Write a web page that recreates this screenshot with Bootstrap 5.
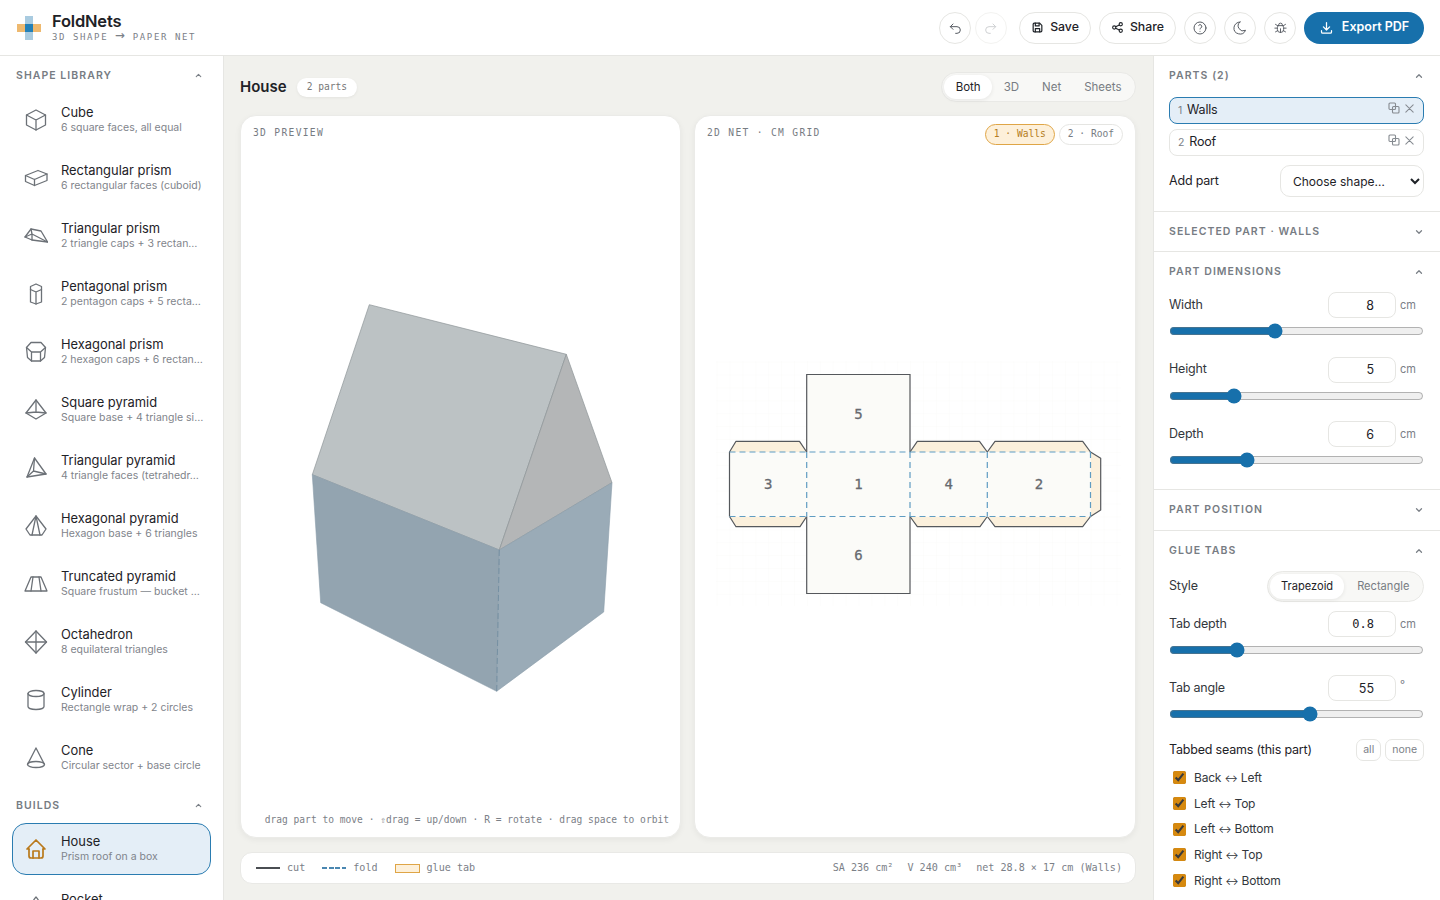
<!DOCTYPE html>
<html lang="en">
<head>
  <meta charset="UTF-8">
  <meta name="viewport" content="width=device-width, initial-scale=1">
  <title>FoldNets</title>
  <link href="https://cdn.jsdelivr.net/npm/bootstrap@5.3.3/dist/css/bootstrap.min.css" rel="stylesheet">
  <style>
    :root { --ink:#1e2227; --mute:#7b8087; --line:#e6e6e3; --blue:#1770ab; --bg:#f1f1ed; }
    html, body { height:100%; overflow:hidden; }
    body { font-family:Inter,"Liberation Sans",sans-serif; color:var(--ink); background:var(--bg); font-size:12.5px; letter-spacing:-.2px; }
    .mono { font-family:"DejaVu Sans Mono","Liberation Mono",monospace; letter-spacing:0; }
    svg.ico { fill:none; stroke:currentColor; stroke-width:1.5; stroke-linecap:round; stroke-linejoin:round; flex:none; }

    .top-bar { height:56px; background:#fff; border-bottom:1px solid var(--line); padding:0 16px 0 17px; flex:none; }
    .logo-grid { display:grid; grid-template-columns:repeat(3,8px); grid-template-rows:repeat(3,8px); margin-right:11px; }
    .brand-name { font-size:16.5px; font-weight:600; line-height:18px; letter-spacing:-.2px; }
    .brand-sub { font-size:9px; letter-spacing:1.6px; line-height:11px; margin-top:2px; color:#7b8087; white-space:nowrap; }
    .brand-arrow { font-size:16px; line-height:0; letter-spacing:1px; }
    .round-btn { width:32px; height:32px; border-radius:50%; border:1px solid var(--line); background:#fff; color:#565b62; padding:0; display:flex; align-items:center; justify-content:center; }
    .round-btn.faded { color:#cfd1d3; border-color:#f3f3f1; }
    .pill-btn { height:32px; border-radius:16px; border:1px solid var(--line); background:#fff; color:var(--ink); font-size:12.3px; font-weight:500; padding:0 11px; display:flex; align-items:center; gap:6px; letter-spacing:0; }
    .export-btn { height:32px; width:120px; border-radius:16px; border:0; background:var(--blue); color:#fff; font-size:12.5px; font-weight:600; display:flex; align-items:center; justify-content:center; gap:8px; letter-spacing:0; }

    .app-body { min-height:0; }
    .left-pane { width:224px; flex:none; background:#fff; border-right:1px solid var(--line); overflow:hidden; padding:0 12px; }
    .right-pane { width:287px; flex:none; background:#fff; border-left:1px solid var(--line); overflow:hidden; }
    .sec-title { font-size:10.5px; font-weight:600; letter-spacing:1.05px; color:#777c83; text-transform:uppercase; white-space:nowrap; }
    .sec-chev { color:#7b8087; }
    .left-head { height:38px; padding:1px 4px 0; }
    .left-head.builds-head { height:33px; padding:0 4px 2px; }
    .shape-row { height:52px; margin-bottom:6px; padding:0 10px 0 11px; border:1.5px solid transparent; border-radius:14px; gap:13px; }
    .shape-row > div { margin-top:-1px; }
    .shape-row.is-on { background:#e4eef7; border-color:#2a7cb1; }
    .shape-ico { width:24px; height:24px; color:#6c7177; }
    svg.ico.shape-ico { stroke-width:1.3; }
    .shape-row.is-on .shape-ico { color:#b9791b; }
    .shape-name { font-size:12.9px; line-height:16px; font-weight:400; white-space:nowrap; letter-spacing:0; }
    .shape-desc { font-size:10.5px; line-height:13px; color:#7f848b; white-space:nowrap; letter-spacing:0; }

    .center-pane { min-width:0; padding:16px 17px 0 16px; }
    .view-head { height:30px; margin-bottom:13px; }
    .view-title { font-size:15px; font-weight:600; letter-spacing:0; }
    .count-chip { height:19px; border-radius:10px; background:#fff; font-size:9.6px; color:#777; padding:0 10px; margin-left:10px; display:flex; align-items:center; box-shadow:0 1px 3px rgba(0,0,0,.06); }
    .seg-wrap { background:#f8f8f6; border:1px solid #e9e9e6; border-radius:15px; padding:2px; display:flex; align-items:center; }
    .seg-item { font-size:11.5px; color:#777c83; padding:0 11.5px; height:24px; line-height:24px; border-radius:12px; letter-spacing:0; }
    .seg-item.is-on { background:#fff; color:var(--ink); box-shadow:0 1px 4px rgba(0,0,0,.08); }
    .view-card { background:#fff; border:1px solid #ebebe8; border-radius:16px; box-shadow:0 2px 6px rgba(0,0,0,.05); height:723px; width:441px; display:flex; flex-direction:column; overflow:hidden; }
    .view-card + .view-card { margin-left:13px; width:442px; }
    .card-top { height:34px; flex:none; padding:0 12px; font-size:9.6px; letter-spacing:1.33px; color:#777c83; }
    .net-chip { font-size:9.6px; height:21px; border-radius:11px; border:1px solid #e5e5e2; color:#777c83; letter-spacing:0; padding:0 8px; margin-top:2px; display:flex; align-items:center; background:#fff; white-space:nowrap; }
    .net-chip.is-on { background:#fdf0da; border-color:#dfa546; color:#b47c22; }
    .card-canvas { flex:1 1 auto; min-height:0; display:block; }
    .card-foot { height:38px; flex:none; font-size:9.6px; line-height:14px; padding:14px 11px 0 0; color:#7b8087; text-align:right; white-space:nowrap; }
    .legend-bar { height:32px; margin-top:14px; background:#fff; border:1px solid #e9e9e6; border-radius:12px; padding:0 13px 0 15px; font-size:10.1px; color:#7b8087; white-space:nowrap; }
    .legend-stat { margin-left:14px; }
    .lg-cut { width:24px; height:2px; background:#4a4d52; margin-right:7px; }
    .lg-fold { width:24px; height:2px; background:repeating-linear-gradient(90deg,#4a87b1 0 5px,transparent 5px 6.500px); margin:0 7px 0 17px; }
    .lg-tab { width:25px; height:9px; background:#fdf0da; border:1.5px solid #dfa546; margin:0 7px 0 17px; }

    .side-sec { padding:0 16px 0 15px; border-bottom:1px solid var(--line); }
    .side-head { height:40px; padding-bottom:1px; }
    .side-head.thin { height:39px; padding-bottom:0; }
    .part-row { height:27px; border:1px solid var(--line); border-radius:8px; padding:0 8px 0 8px; margin-bottom:5px; font-size:12.5px; }
    .part-row.is-on { background:#e4eef7; border:1.5px solid #2a7cb1; }
    .part-num { font-size:10.5px; color:#7b8087; margin-right:5px; }
    svg.ico.part-act { color:#858a90; stroke-width:1.1; margin-top:-5px; }
    .add-select { width:144px; height:32px; border:1px solid var(--line); border-radius:10px; background:#fff; font:inherit; font-size:12px; padding:0 4px 0 8px; color:var(--ink); }
    .field-line { height:26px; color:#33373c; }
    .num-box { width:68px; height:26px; padding:0 6px; text-align:right; font-size:12.5px; border:1px solid var(--line); border-radius:8px; margin-left:auto; color:var(--ink); box-shadow:none; letter-spacing:0; }
    .num-box.mono { font-size:12px; }
    .num-unit { width:28px; padding-left:4px; font-size:11px; color:#7b8087; letter-spacing:0; }
    .slide-line { display:block; width:100%; height:16px; margin:5px 0 0; accent-color:var(--blue); }
    .field-gap { height:17.5px; }
    .field-gap.tight { height:17px; }
    .seg-wrap.tall { border-radius:16px; height:31px; width:157px; }
    .seg-wrap.tall .seg-item { height:25px; line-height:25px; font-size:11.1px; padding:0 11px; margin-right:2px; }
    .tiny-btn { height:22px; border:1px solid var(--line); border-radius:7px; background:#fff; font-size:10.5px; color:#7b8087; padding:0 6px; letter-spacing:0; }
    .seam-line { height:25.7px; font-size:12px; color:#33373c; padding-left:4px; gap:8px; }
    .seam-line input { accent-color:#d6890f; margin:0; width:13px; height:13px; }
    .seam-arrow { font-size:10px; }
  </style>
</head>
<body>
<div class="d-flex flex-column vh-100">

  <!-- top bar -->
  <header class="top-bar d-flex align-items-center">
    <div class="logo-grid">
      <span></span><span style="background:#a9cbe0"></span><span></span>
      <span style="background:#eeb96f"></span><span style="background:#2280b8"></span><span style="background:#eeb96f"></span>
      <span></span><span style="background:#a9cbe0"></span><span></span>
    </div>
    <div>
      <div class="brand-name">FoldNets</div>
      <div class="brand-sub mono">3D SHAPE <span class="brand-arrow">→</span> PAPER NET</div>
    </div>
    <div class="ms-auto d-flex align-items-center gap-2">
      <div class="d-flex gap-1 me-1">
        <button class="round-btn" type="button"><svg class="ico" width="16" height="16" viewBox="0 0 24 24"><path d="M9 14l-4-4 4-4"/><path d="M5 10h10a5 5 0 0 1 0 10h-2"/></svg></button>
        <button class="round-btn faded" type="button"><svg class="ico" width="16" height="16" viewBox="0 0 24 24"><path d="M15 14l4-4-4-4"/><path d="M19 10h-10a5 5 0 0 0 0 10h2"/></svg></button>
      </div>
      <button class="pill-btn" type="button"><svg class="ico" width="13" height="13" viewBox="0 0 24 24" style="stroke-width:2.200"><path d="M6 4h10l4 4v10a2 2 0 0 1-2 2H6a2 2 0 0 1-2-2V6a2 2 0 0 1 2-2z"/><path d="M8 4v5h7V4"/><path d="M8 20v-6h8v6"/></svg>Save</button>
      <button class="pill-btn" type="button"><svg class="ico" width="13" height="13" viewBox="0 0 24 24" style="stroke-width:2"><circle cx="6" cy="12" r="3"/><circle cx="18" cy="6" r="3"/><circle cx="18" cy="18" r="3"/><path d="M8.700 10.700l6.600-3.400M8.700 13.300l6.600 3.400"/></svg>Share</button>
      <button class="round-btn" type="button"><svg class="ico" width="16" height="16" viewBox="0 0 24 24"><circle cx="12" cy="12" r="9"/><path d="M12 17v.01"/><path d="M12 13.500a1.500 1.500 0 0 1 1-1.500 2.600 2.600 0 1 0-3-4"/></svg></button>
      <button class="round-btn" type="button"><svg class="ico" width="16" height="16" viewBox="0 0 24 24"><path d="M12 3a7.500 7.500 0 0 0 8.300 12.400A9 9 0 1 1 12 3z"/></svg></button>
      <button class="round-btn" type="button"><svg class="ico" width="15" height="15" viewBox="0 0 24 24"><path d="M9 9V8a3 3 0 0 1 6 0v1"/><path d="M8 9h8a6 6 0 0 1 1 3v3a5 5 0 0 1-10 0v-3a6 6 0 0 1 1-3"/><path d="M3 13h4M17 13h4M12 20v-6M4 19l3.400-2M20 19l-3.400-2M4 7l3.800 2.400M20 7l-3.800 2.400"/></svg></button>
      <button class="export-btn" type="button"><svg class="ico" width="15" height="15" viewBox="0 0 24 24" style="stroke-width:2"><path d="M4 17v2a2 2 0 0 0 2 2h12a2 2 0 0 0 2-2v-2"/><path d="M7 11l5 5 5-5M12 4v12"/></svg>Export PDF</button>
    </div>
  </header>

  <div class="app-body d-flex flex-grow-1">

    <!-- shape library -->
    <aside class="left-pane">
      <div class="left-head d-flex align-items-center justify-content-between">
        <span class="sec-title">Shape library</span>
        <svg class="ico sec-chev me-1" width="9" height="9" viewBox="0 0 12 12"><path d="M3 7.500l3-3 3 3"/></svg>
      </div>

      <div class="shape-row d-flex align-items-center">
        <svg class="ico shape-ico" viewBox="0 0 24 24"><path d="M12 2l9.500 5v10L12 22l-9.500-5V7z"/><path d="M2.500 7l9.500 5 9.500-5M12 12v10"/></svg>
        <div><div class="shape-name">Cube</div><div class="shape-desc">6 square faces, all equal</div></div>
      </div>
      <div class="shape-row d-flex align-items-center">
        <svg class="ico shape-ico" viewBox="0 0 24 24"><path d="M1.500 9.500L14 4.500l9 3.500v6.500L10.500 19.500l-9-4z"/><path d="M1.500 9.500l9 4 12.500-5.500M10.500 13.500v6"/></svg>
        <div><div class="shape-name">Rectangular prism</div><div class="shape-desc">6 rectangular faces (cuboid)</div></div>
      </div>
      <div class="shape-row d-flex align-items-center">
        <svg class="ico shape-ico" viewBox="0 0 24 24"><path d="M1 13L7 5l10 2 6.500 11L8 16z"/><path d="M7 5l1 5 15.500 8M1 13l7-3M8 10v6"/></svg>
        <div><div class="shape-name">Triangular prism</div><div class="shape-desc">2 triangle caps + 3 rectan…</div></div>
      </div>
      <div class="shape-row d-flex align-items-center">
        <svg class="ico shape-ico" viewBox="0 0 24 24"><path d="M12 2l5.500 2.500v15.500L12 22l-5.500-2V4.500z"/><path d="M6.500 7.500l5.500 2.500 5.500-2.500M12 10v12"/></svg>
        <div><div class="shape-name">Pentagonal prism</div><div class="shape-desc">2 pentagon caps + 5 recta…</div></div>
      </div>
      <div class="shape-row d-flex align-items-center">
        <svg class="ico shape-ico" viewBox="0 0 24 24"><path d="M7 2.500h10l4.500 5-1 10-4 3.500H7.500l-4-3.500-1-10z"/><path d="M2.500 7.500l5 4.500h9l5-4.500M7.500 12v9M16.500 12v9"/></svg>
        <div><div class="shape-name">Hexagonal prism</div><div class="shape-desc">2 hexagon caps + 6 rectan…</div></div>
      </div>
      <div class="shape-row d-flex align-items-center">
        <svg class="ico shape-ico" viewBox="0 0 24 24"><path d="M12 2l10 13-10 6L2 15z"/><path d="M12 2v12M2 15l10-1 10 1"/></svg>
        <div><div class="shape-name">Square pyramid</div><div class="shape-desc">Square base + 4 triangle si…</div></div>
      </div>
      <div class="shape-row d-flex align-items-center">
        <svg class="ico shape-ico" viewBox="0 0 24 24"><path d="M10.500 2L22 18 3 21z"/><path d="M10.500 2l-1 13L22 18M9.500 15L3 21"/></svg>
        <div><div class="shape-name">Triangular pyramid</div><div class="shape-desc">4 triangle faces (tetrahedr…</div></div>
      </div>
      <div class="shape-row d-flex align-items-center">
        <svg class="ico shape-ico" viewBox="0 0 24 24"><path d="M12 2l10 13-4 6H6l-4-6z"/><path d="M12 2L8 21M12 2l4 19"/></svg>
        <div><div class="shape-name">Hexagonal pyramid</div><div class="shape-desc">Hexagon base + 6 triangles</div></div>
      </div>
      <div class="shape-row d-flex align-items-center">
        <svg class="ico shape-ico" viewBox="0 0 24 24"><path d="M7 5h10l6 14H1z"/><path d="M9 5L7 19M15 5l2 14"/></svg>
        <div><div class="shape-name">Truncated pyramid</div><div class="shape-desc">Square frustum — bucket …</div></div>
      </div>
      <div class="shape-row d-flex align-items-center">
        <svg class="ico shape-ico" viewBox="0 0 24 24"><path d="M12 1l10.500 11L12 23 1.500 12z"/><path d="M1.500 12h21M12 1v22"/></svg>
        <div><div class="shape-name">Octahedron</div><div class="shape-desc">8 equilateral triangles</div></div>
      </div>
      <div class="shape-row d-flex align-items-center">
        <svg class="ico shape-ico" viewBox="0 0 24 24"><ellipse cx="12" cy="5.500" rx="8" ry="3"/><path d="M4 5.500v13c0 1.700 3.600 3 8 3s8-1.300 8-3v-13"/></svg>
        <div><div class="shape-name">Cylinder</div><div class="shape-desc">Rectangle wrap + 2 circles</div></div>
      </div>
      <div class="shape-row d-flex align-items-center">
        <svg class="ico shape-ico" viewBox="0 0 24 24"><path d="M12 2L3.500 18.500M12 2l8.500 16.500"/><ellipse cx="12" cy="18.500" rx="8.500" ry="3"/></svg>
        <div><div class="shape-name">Cone</div><div class="shape-desc">Circular sector + base circle</div></div>
      </div>

      <div class="left-head builds-head d-flex align-items-center justify-content-between">
        <span class="sec-title">Builds</span>
        <svg class="ico sec-chev me-1" width="9" height="9" viewBox="0 0 12 12"><path d="M3 7.500l3-3 3 3"/></svg>
      </div>
      <div class="shape-row is-on d-flex align-items-center">
        <svg class="ico shape-ico" viewBox="0 0 24 24" style="stroke-width:1.700"><path d="M5 12H3l9-9 9 9h-2"/><path d="M5 12v7a2 2 0 0 0 2 2h10a2 2 0 0 0 2-2v-7"/><path d="M9 21v-7h6v7"/></svg>
        <div><div class="shape-name">House</div><div class="shape-desc">Prism roof on a box</div></div>
      </div>
      <div class="shape-row d-flex align-items-center">
        <svg class="ico shape-ico" viewBox="0 0 24 24"><path d="M12 2c3 3 4 6 4 10v6H8v-6c0-4 1-7 4-10z"/></svg>
        <div><div class="shape-name">Rocket</div><div class="shape-desc">Cone on a cylinder</div></div>
      </div>
    </aside>

    <!-- preview area -->
    <main class="center-pane flex-grow-1">
      <div class="view-head d-flex align-items-center">
        <span class="view-title">House</span>
        <span class="count-chip mono">2 parts</span>
        <div class="seg-wrap ms-auto">
          <span class="seg-item is-on">Both</span><span class="seg-item">3D</span><span class="seg-item">Net</span><span class="seg-item">Sheets</span>
        </div>
      </div>

      <div class="d-flex">
        <section class="view-card">
          <div class="card-top d-flex align-items-center mono">3D PREVIEW</div>
          <svg class="card-canvas" viewBox="241 150 439 649">
            <polygon points="369.300,304.700 566.300,354.300 499.300,550 312.300,474.700" fill="#bcc2c4" stroke="#8e9598" stroke-width=".7"/>
            <polygon points="566.300,354.300 612,482.700 499.300,550" fill="#b4b6b7" stroke="#8e9598" stroke-width=".7"/>
            <polygon points="312.300,474.700 499.300,550 496.700,691.300 320.700,602.700" fill="#93a4b0" stroke="#8a9ca9" stroke-width=".6"/>
            <polygon points="499.300,550 612,482.700 603.700,612 496.700,691.300" fill="#9aabb7" stroke="#8a9ca9" stroke-width=".6"/>
            <line x1="499.300" y1="550" x2="496.700" y2="691.300" stroke="#6d8a9e" stroke-width=".8" stroke-dasharray="6 3"/>
          </svg>
          <div class="card-foot mono">drag part to move · ⇧drag = up/down · R = rotate · drag space to orbit</div>
        </section>

        <section class="view-card">
          <div class="card-top d-flex align-items-center mono">
            <span>2D NET · CM GRID</span>
            <span class="net-chip is-on ms-auto me-1">1 · Walls</span>
            <span class="net-chip">2 · Roof</span>
          </div>
          <svg class="card-canvas" viewBox="695 150 440 687">
            <defs>
              <pattern id="cmGrid" x="729.500" y="374.500" width="12.900" height="12.900" patternUnits="userSpaceOnUse">
                <path d="M12.900 0H0V12.900" fill="none" stroke="#f9f9f7" stroke-width=".6"/>
              </pattern>
            </defs>
            <rect x="716" y="361" width="405" height="245" fill="url(#cmGrid)"/>
            <!-- glue tabs -->
            <g fill="#fbf0dc" stroke="#55585c" stroke-width="1.200" stroke-linejoin="round">
              <polyline points="729.500,452 736,441.300 799.500,441.300 806.700,452"/>
              <polyline points="729.500,516.500 736,526.700 800,526.700 806.700,516.500"/>
              <polyline points="910,452 917.300,441.300 979.500,441.300 987.300,452"/>
              <polyline points="910,516.500 917.300,526.700 980,526.700 987.300,516.500"/>
              <polyline points="987.300,452 995,441.300 1082.700,441.300 1090.500,452"/>
              <polyline points="987.300,516.500 995,526.700 1082.700,526.700 1090.500,516.500"/>
              <polyline points="1090.500,452 1100.700,458.300 1100.700,510 1090.500,516.500"/>
            </g>
            <!-- faces -->
            <path d="M806.700 374.500H910V452H1090.500V516.500H910V593.500H806.700V516.500H729.500V452H806.700Z" fill="#fbfbf8"/>
            <path d="M806.700 452V374.500H910V452M806.700 516.500V593.500H910V516.500M729.500 452V516.500" fill="none" stroke="#55585c" stroke-width="1.200"/>
            <!-- folds -->
            <g stroke="#5f9cc2" stroke-width="1.200" stroke-dasharray="6 4" fill="none">
              <path d="M729.500 452H1090.500M729.500 516.500H1090.500"/>
              <path d="M806.700 452V516.500M910 452V516.500M987.300 452V516.500M1090.500 452V516.500"/>
            </g>
            <g font-family="DejaVu Sans Mono, monospace" font-size="14" fill="#66696f" stroke="#66696f" stroke-width=".3" text-anchor="middle">
              <text x="858.300" y="418.500">5</text>
              <text x="768" y="489">3</text>
              <text x="858.300" y="489">1</text>
              <text x="948.600" y="489">4</text>
              <text x="1038.800" y="489">2</text>
              <text x="858.300" y="560">6</text>
            </g>
          </svg>
        </section>
      </div>

      <div class="legend-bar d-flex align-items-center mono">
        <span class="lg-cut"></span><span>cut</span>
        <span class="lg-fold"></span><span>fold</span>
        <span class="lg-tab"></span><span>glue tab</span>
        <span class="ms-auto">SA 236 cm²</span>
        <span class="legend-stat">V 240 cm³</span>
        <span class="legend-stat">net 28.8 × 17 cm (Walls)</span>
      </div>
    </main>

    <!-- settings -->
    <aside class="right-pane">
      <div class="side-sec" style="height:156px">
        <div class="side-head d-flex align-items-center justify-content-between" style="height:41px">
          <span class="sec-title">Parts (2)</span>
          <svg class="ico sec-chev" width="10" height="10" viewBox="0 0 12 12"><path d="M3 7.500l3-3 3 3"/></svg>
        </div>
        <div class="part-row is-on d-flex align-items-center">
          <span class="part-num">1</span><span>Walls</span>
          <svg class="ico part-act ms-auto me-1" width="12" height="12" viewBox="0 0 12 12"><rect x="1" y="1" width="6.500" height="6.500" rx="1"/><rect x="4.500" y="4.500" width="6.500" height="6.500" rx="1"/></svg>
          <svg class="ico part-act" width="11" height="11" viewBox="0 0 12 12"><path d="M2 2l8 8M10 2l-8 8"/></svg>
        </div>
        <div class="part-row d-flex align-items-center">
          <span class="part-num">2</span><span>Roof</span>
          <svg class="ico part-act ms-auto me-1" width="12" height="12" viewBox="0 0 12 12"><rect x="1" y="1" width="6.500" height="6.500" rx="1"/><rect x="4.500" y="4.500" width="6.500" height="6.500" rx="1"/></svg>
          <svg class="ico part-act" width="11" height="11" viewBox="0 0 12 12"><path d="M2 2l8 8M10 2l-8 8"/></svg>
        </div>
        <div class="d-flex align-items-center justify-content-between" style="margin-top:9px">
          <span>Add part</span>
          <select class="add-select"><option>Choose shape…</option></select>
        </div>
      </div>

      <div class="side-sec">
        <div class="side-head thin d-flex align-items-center justify-content-between">
          <span class="sec-title">Selected part · Walls</span>
          <svg class="ico sec-chev" width="10" height="10" viewBox="0 0 12 12"><path d="M3 4.500l3 3 3-3"/></svg>
        </div>
      </div>

      <div class="side-sec" style="height:238px">
        <div class="side-head d-flex align-items-center justify-content-between">
          <span class="sec-title">Part dimensions</span>
          <svg class="ico sec-chev" width="10" height="10" viewBox="0 0 12 12"><path d="M3 7.500l3-3 3 3"/></svg>
        </div>
        <div class="field-line d-flex align-items-center"><span>Width</span><input class="form-control num-box" type="number" value="8"><span class="num-unit">cm</span></div>
        <input class="slide-line" type="range" min="0" max="100" step="0.1" value="41">
        <div class="field-gap"></div>
        <div class="field-line d-flex align-items-center"><span>Height</span><input class="form-control num-box" type="number" value="5"><span class="num-unit">cm</span></div>
        <input class="slide-line" type="range" min="0" max="100" step="0.1" value="23.700">
        <div class="field-gap"></div>
        <div class="field-line d-flex align-items-center"><span>Depth</span><input class="form-control num-box" type="number" value="6"><span class="num-unit">cm</span></div>
        <input class="slide-line" type="range" min="0" max="100" step="0.1" value="29.200">
      </div>

      <div class="side-sec">
        <div class="side-head d-flex align-items-center justify-content-between">
          <span class="sec-title">Part position</span>
          <svg class="ico sec-chev" width="10" height="10" viewBox="0 0 12 12"><path d="M3 4.500l3 3 3-3"/></svg>
        </div>
      </div>

      <div class="side-sec border-0">
        <div class="side-head d-flex align-items-center justify-content-between">
          <span class="sec-title">Glue tabs</span>
          <svg class="ico sec-chev" width="10" height="10" viewBox="0 0 12 12"><path d="M3 7.500l3-3 3 3"/></svg>
        </div>
        <div class="d-flex align-items-center justify-content-between" style="height:31px">
          <span class="field-line d-flex align-items-center">Style</span>
          <div class="seg-wrap tall"><span class="seg-item is-on">Trapezoid</span><span class="seg-item">Rectangle</span></div>
        </div>
        <div class="field-line d-flex align-items-center" style="margin-top:9px"><span>Tab depth</span><input class="form-control num-box mono" type="number" value="0.8" step="0.1"><span class="num-unit">cm</span></div>
        <input class="slide-line" type="range" min="0" max="100" step="0.1" value="25.200">
        <div class="field-gap tight"></div>
        <div class="field-line d-flex align-items-center"><span>Tab angle</span><input class="form-control num-box" type="number" value="55"><span class="num-unit pb-2">°</span></div>
        <input class="slide-line" type="range" min="0" max="100" step="0.1" value="55.700">
        <div class="d-flex align-items-center justify-content-between" style="height:22px;margin-top:17px">
          <span>Tabbed seams (this part)</span>
          <span class="d-flex gap-1"><button class="tiny-btn" type="button">all</button><button class="tiny-btn" type="button">none</button></span>
        </div>
        <div style="margin-top:4px">
          <label class="seam-line d-flex align-items-center"><input type="checkbox" checked><span>Back <span class="seam-arrow">↔</span> Left</span></label>
          <label class="seam-line d-flex align-items-center"><input type="checkbox" checked><span>Left <span class="seam-arrow">↔</span> Top</span></label>
          <label class="seam-line d-flex align-items-center"><input type="checkbox" checked><span>Left <span class="seam-arrow">↔</span> Bottom</span></label>
          <label class="seam-line d-flex align-items-center"><input type="checkbox" checked><span>Right <span class="seam-arrow">↔</span> Top</span></label>
          <label class="seam-line d-flex align-items-center"><input type="checkbox" checked><span>Right <span class="seam-arrow">↔</span> Bottom</span></label>
        </div>
      </div>
    </aside>
  </div>
</div>
</body>
</html>
